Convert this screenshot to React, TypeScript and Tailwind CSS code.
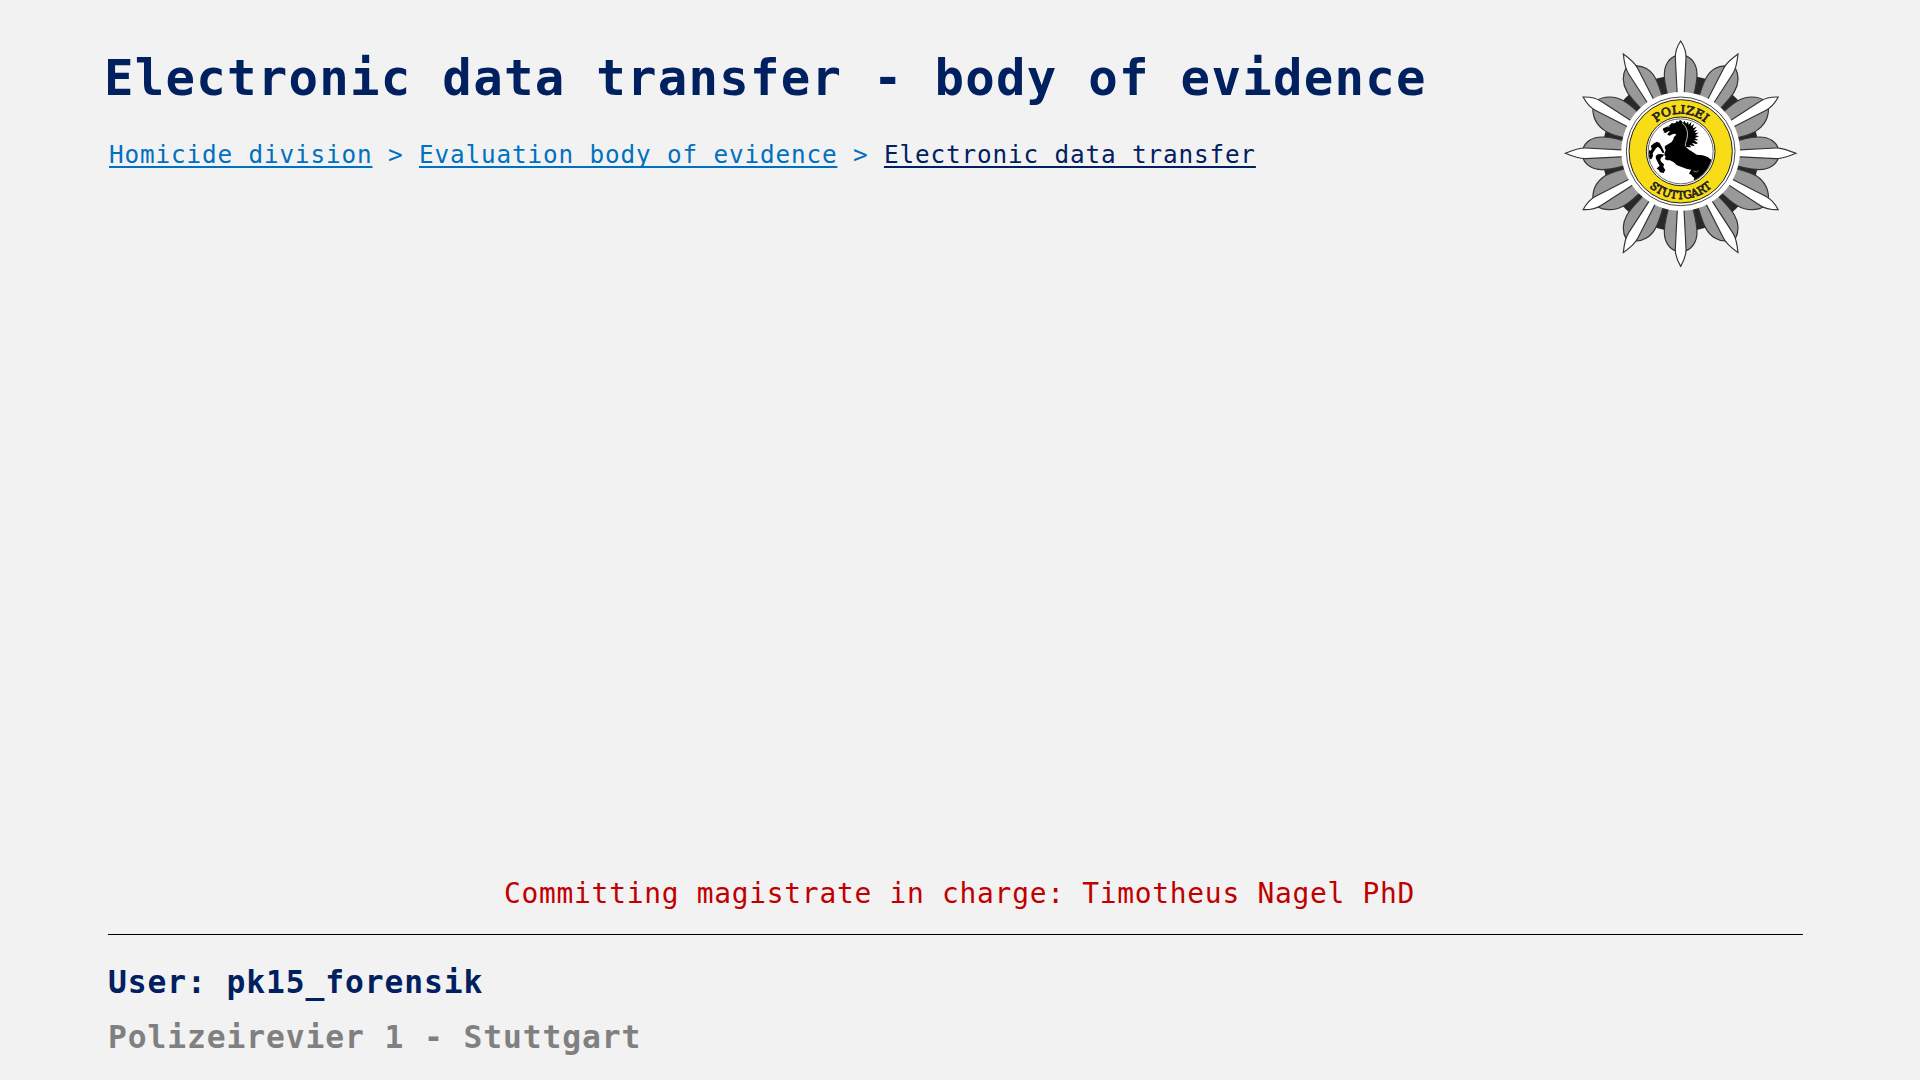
const UPRIGHT_PETAL =
  "M-33 -150 C-43 -192 -49 -208 -49 -236 C-49 -266 -34 -286 -14 -293 L14 -293 C34 -286 49 -266 49 -236 C49 -208 43 -192 33 -150 Z";
const STEEP_PETAL =
  "M-30 -150 C-38 -190 -47 -212 -47 -240 C-47 -270 -34 -292 -12 -305 L12 -296 C34 -286 48 -262 47 -232 C46 -208 41 -192 32 -150 Z";
const FLAT_PETAL =
  "M-40 -150 C-46 -182 -56 -204 -55 -230 C-53 -262 -38 -284 -12 -297 L12 -297 C34 -286 51 -258 51 -226 C51 -204 46 -182 38 -150 Z";

const RAYS = [
  { angle: 0, length: 337, petal: UPRIGHT_PETAL, mirror: 1 },
  { angle: 30, length: 344, petal: STEEP_PETAL, mirror: -1 },
  { angle: 60, length: 338, petal: FLAT_PETAL, mirror: -1 },
  { angle: 90, length: 346, petal: UPRIGHT_PETAL, mirror: 1 },
  { angle: 120, length: 338, petal: FLAT_PETAL, mirror: 1 },
  { angle: 150, length: 344, petal: STEEP_PETAL, mirror: 1 },
  { angle: 180, length: 339, petal: UPRIGHT_PETAL, mirror: 1 },
  { angle: 210, length: 344, petal: STEEP_PETAL, mirror: -1 },
  { angle: 240, length: 338, petal: FLAT_PETAL, mirror: -1 },
  { angle: 270, length: 346, petal: UPRIGHT_PETAL, mirror: 1 },
  { angle: 300, length: 338, petal: FLAT_PETAL, mirror: 1 },
  { angle: 330, length: 344, petal: STEEP_PETAL, mirror: 1 },
];

function Horse() {
  return (
    <g clipPath="url(#disc)">
      <path
        fill="#000"
        d="M386 275 L379 274 L376 280 L364 280 L361 284 L351 290 L340 295 L338 301 L343 303 L340 307 L347 309 L355 304 L361 305 L354 309 L352 314 L359 317 L367 313 L375 311 L379 314 L372 321 L369 330 L364 337 L354 343 L345 348 L344 353 L347 360 L344 369 L337 368 L331 357 L324 350 L318 355 L313 362 L308 370 L309 378 L304 388 L297 386 L295 378 L299 373 L293 370 L298 360 L303 362 L305 355 L302 348 L312 340 L321 335 L329 339 L336 352 L341 362 L344 372 L338 380 L333 383 L331 390 L334 396 L342 403 L340 411 L346 420 L341 429 L330 427 L326 419 L320 416 L325 410 L329 408 L324 398 L318 386 L317 378 L324 373 L333 372 L343 374 L347 381 L344 387 L351 391 L360 391 L371 397 L381 406 L397 412 L411 417 L424 419 L421 423 L417 431 L424 434 L428 440 L433 443 L431 450 L445 455 L480 430 L500 395 L482 388 L473 381 L458 376 L440 374 L428 366 L417 359 L407 350 L417 352 L424 352 L418 345 L430 348 L434 347 L425 338 L438 342 L444 340 L432 331 L446 331 L434 324 L447 319 L436 316 L446 308 L434 309 L442 299 L431 302 L440 290 L428 295 L432 282 L422 289 L424 276 L416 284 L414 275 L408 281 L404 272 L399 278 L393 271 L389 271 Z"
      />
      <path d="M396 279 C408 286 414 303 412 318 C412 330 405 336 406 349" fill="none" stroke="#fff" strokeWidth="2.2" />
      <path d="M353 291 L359 289" stroke="#fff" strokeWidth="2" />
      <path d="M430 423 L440 426 L445 421" fill="none" stroke="#fff" strokeWidth="1.5" />
    </g>
  );
}

function Badge() {
  return (
    <svg viewBox="0 0 780 750" className="block h-[250px] w-[260px]">
      <defs>
        <path id="arcTop" d="M 279 364 A 113 113 0 0 1 505 364" />
        <path id="arcBottom" d="M 249 364 A 143 143 0 0 0 535 364" />
        <clipPath id="disc">
          <circle cx="392" cy="364" r="96" />
        </clipPath>
      </defs>
      <circle cx="392" cy="370" r="235" fill="#2b2728" />
      {RAYS.map(({ angle, petal, mirror }) => (
        <path
          key={angle}
          transform={`translate(392 370) rotate(${angle}) scale(${mirror} 1)`}
          d={petal}
          fill="#999"
          stroke="#333"
          strokeWidth="3.5"
        />
      ))}
      {RAYS.map(({ angle, length }) => (
        <path
          key={angle}
          transform={`translate(392 370) rotate(${angle})`}
          d={`M-9 -150 L-16 -285 C-17 -304 -10 -322 0 -${length} C10 -322 17 -304 16 -285 L9 -150 Z`}
          fill="#fff"
          stroke="#333"
          strokeWidth="3.5"
        />
      ))}
      <circle cx="392" cy="364" r="178" fill="#fff" />
      <circle cx="392" cy="364" r="163" fill="none" stroke="#222" strokeWidth="2.5" />
      <circle cx="392" cy="364" r="155" fill="#f8dc18" stroke="#222" strokeWidth="3" />
      <circle cx="392" cy="364" r="103" fill="#fff" stroke="#222" strokeWidth="3" />
      <circle cx="392" cy="364" r="97.5" fill="none" stroke="#222" strokeWidth="2" />
      <Horse />
      <g
        className="font-['DejaVu_Serif',serif]"
        fill="#222"
        stroke="#222"
        strokeWidth="2.2"
        textAnchor="middle"
      >
        <text fontSize="35" textLength="160" lengthAdjust="spacingAndGlyphs">
          <textPath href="#arcTop" startOffset="50%">POLIZEI</textPath>
        </text>
        <text fontSize="33" textLength="206" lengthAdjust="spacingAndGlyphs">
          <textPath href="#arcBottom" startOffset="50%">STUTTGART</textPath>
        </text>
      </g>
    </svg>
  );
}

const LINK = "underline decoration-2 underline-offset-[3px] [text-decoration-skip-ink:none]";

export default function App() {
  return (
    <div className="flex h-[1080px] w-[1920px] flex-col overflow-hidden bg-[#f2f2f2] font-['DejaVu_Sans_Mono',monospace] whitespace-pre">
      <header className="flex h-[280px] pt-[30px] pl-[104px]">
        <div className="w-[1446px] pt-[19px]">
          <h1 className="text-[49px] leading-[60px] font-bold tracking-[1.26px] text-[#002060]">
            Electronic data transfer - body of evidence
          </h1>
          <nav className="mt-[28px] pl-[5px] text-[24.3px] leading-[36px] tracking-[0.87px] text-[#0070c0]">
            <span className={LINK}>Homicide division</span>
            <span> &gt; </span>
            <span className={LINK}>Evaluation body of evidence</span>
            <span> &gt; </span>
            <span className={`${LINK} text-[#002060]`}>Electronic data transfer</span>
          </nav>
        </div>
        <Badge />
      </header>
      <main className="flex-1" />
      <footer className="flex h-[206px] flex-col pr-[117px] pl-[108px]">
        <p className="pl-[396px] text-[27.9px] leading-[40px] tracking-[0.73px] text-[#c00000]">
          Committing magistrate in charge: Timotheus Nagel PhD
        </p>
        <div className="mt-[20px] h-px shrink-0 bg-black" />
        <p className="mt-[25px] text-[31.3px] leading-[44px] font-bold tracking-[0.91px] text-[#002060]">
          User: pk15_forensik
        </p>
        <p className="mt-[11px] text-[31.3px] leading-[44px] font-bold tracking-[0.91px] text-[#808080]">
          Polizeirevier 1 - Stuttgart
        </p>
      </footer>
    </div>
  );
}
